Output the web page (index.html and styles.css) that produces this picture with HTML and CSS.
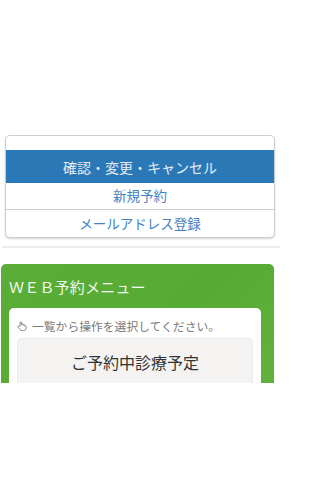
FILE: index.html
```html
<!DOCTYPE html>
<html lang="ja">
<head>
<meta charset="utf-8">
<link rel="stylesheet" href="styles.css">
</head>
<body>
<div class="page">
  <div class="card">
    <div class="card-top"></div>
    <div class="row active">確認・変更・キャンセル</div>
    <div class="row link bordered">新規予約</div>
    <div class="row link">メールアドレス登録</div>
  </div>
  <div class="sep"></div>
  <div class="menu">
    <div class="menu-title">ＷＥＢ予約メニュー</div>
    <div class="panel">
      <div class="hint"><svg class="hand" viewBox="0 0 10 10" width="10" height="10"><path d="M3 5V1.6a.8.8 0 0 1 1.6 0V4.2M4.6 4.2V3.4a.8.8 0 0 1 1.6 0v1M6.2 4.4a.8.8 0 0 1 1.6 0v1M7.8 5.2a.8.8 0 0 1 1.4 .2V7a2.6 2.6 0 0 1-2.6 2.6H5A2.6 2.6 0 0 1 2.6 8L1 6.2a.8.8 0 0 1 1.2-1L3 6" fill="none" stroke="#8a8a8a" stroke-width="1"/></svg><span>一覧から操作を選択してください。</span></div>
      <div class="btn">ご予約中診療予定</div>
    </div>
  </div>
</div>
</body>
</html>
```
FILE: styles.css
```css
html, body {
  margin: 0;
  padding: 0;
  background: #fff;
}
body {
  font-family: "Noto Sans CJK JP", "Noto Sans", sans-serif;
  width: 280px;
  height: 498px;
  overflow: hidden;
}
.page {
  padding-top: 135px;
}
.card {
  margin: 0 5px;
  border: 1px solid #cfcfcf;
  border-radius: 5px;
  box-shadow: 0 1px 2px rgba(0,0,0,0.18);
  overflow: hidden;
  background: #fff;
}
.card-top {
  height: 14px;
}
.row {
  display: flex;
  align-items: center;
  justify-content: center;
  height: 27px;
  font-size: 13.5px;
  line-height: 1;
}
.row.active {
  height: 33px;
  background: #2b78b7;
  color: #e4edf6;
  font-size: 14px;
}
.row.link {
  color: #4382c2;
}
.row.bordered {
  border-bottom: 1px solid #cfcfcf;
  height: 26px;
}
.sep {
  margin: 8px 0 0 2px;
  height: 2px;
  background: #ececec;
}
.menu {
  margin: 16px 6px 0 1px;
  height: 119px;
  overflow: hidden;
  background: linear-gradient(135deg, #5aad37 0%, #57aa33 60%, #60b23d 100%);
  border-radius: 5px 5px 0 0;
  padding: 0 13px 0 8px;
}
.menu-title {
  height: 44px;
  display: flex;
  align-items: center;
  color: #f2f8ee;
  font-size: 15px;
  line-height: 1;
  letter-spacing: 0.2px;
}
.panel {
  background: #fff;
  border-radius: 5px 5px 0 0;
  padding: 0 8px;
  height: 100px;
}
.hint {
  height: 24px;
  padding-top: 6px;
  display: flex;
  align-items: center;
  color: #7a7a7a;
  font-size: 11.8px;
  line-height: 1;
}
.hand {
  margin-right: 5px;
  flex: none;
}
.btn {
  height: 60px;
  background: #f4f3f2;
  border: 1px solid #ebebeb;
  border-radius: 4px;
  display: flex;
  justify-content: center;
  padding-top: 15px;
  box-sizing: border-box;
  color: #333;
  font-size: 16px;
  line-height: 1.1;
}
```
